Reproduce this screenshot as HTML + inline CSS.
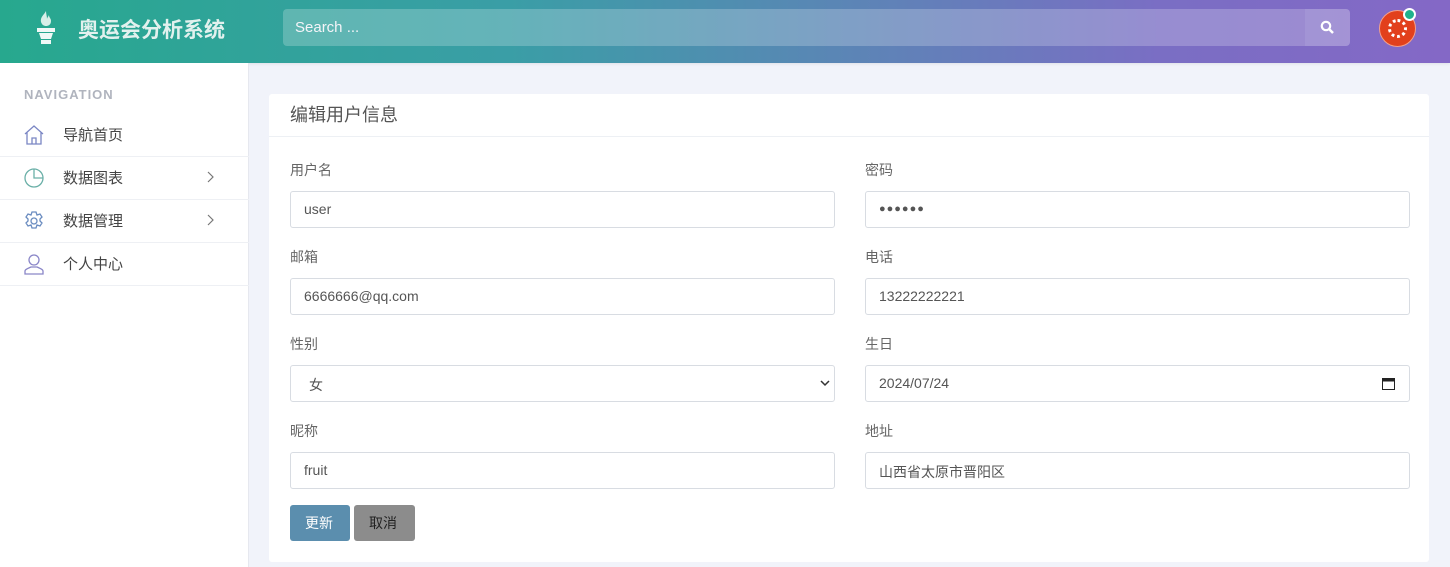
<!DOCTYPE html>
<html><head><meta charset="utf-8"><style>
*{box-sizing:border-box;margin:0;padding:0}
body{width:1450px;height:567px;overflow:hidden;background:#f1f3fa;font-family:"Liberation Sans","Noto Sans CJK SC",sans-serif;position:relative}
.hdr{position:absolute;left:0;top:0;width:1450px;height:63px;background:linear-gradient(90deg,#27a88e 0%,#3a9ea6 35%,#7a6ec4 80%,#8468c6 100%);box-shadow:0 1px 3px rgba(0,0,0,.08)}
.logo{position:absolute;left:78px;top:14px;font-size:21px;font-weight:bold;color:#e2f1ee}
.search{position:absolute;left:283px;top:9px;width:1022px;height:37px;background:rgba(255,255,255,.22);border-radius:4px 0 0 4px;color:#f4f4f8;font-size:15px;padding:10px 12px}
.sbtn{position:absolute;left:1305px;top:9px;width:45px;height:37px;background:rgba(255,255,255,.28);border-radius:0 4px 4px 0}
.side{position:absolute;left:0;top:63px;width:249px;height:504px;background:#fff;border-right:1px solid #e6e8ef}
.navt{position:absolute;left:24px;top:24px;font-size:13px;color:#b0b4be;letter-spacing:1px;font-weight:bold}
.item{position:absolute;left:0;width:249px;height:43px;border-bottom:1px solid #eef0f4;font-size:15px;color:#444}
.item span{position:absolute;left:63px;top:10px}
.item svg{position:absolute;left:23px;top:10px}
.item .ch{position:absolute;left:208px;top:10px}
.card{position:absolute;left:269px;top:94px;width:1160px;height:468px;background:#fff;border-radius:3px}
.ct{height:43px;border-bottom:1px solid #edf0f4;font-size:18px;color:#555;padding:7px 21px}
.lbl{position:absolute;font-size:14px;color:#666}
.inp{position:absolute;width:545px;height:37px;border:1px solid #d8dce2;border-radius:3px;font-size:14px;color:#555;padding:9px 13px}
.btn{position:absolute;top:411px;height:36px;border-radius:3px;color:#fff;font-size:14px;padding:8px 15px}
</style></head><body>
<div class="hdr">
<svg style="position:absolute;left:35px;top:10px" width="22" height="36" viewBox="0 0 22 36"><path d="M11 1c-2 4-6 6-5 11 1 3 3 4 5 4s5-1 5-5c0-3-2-3-2-6-1 2-2 3-2 4 0-3-1-5-1-8z" fill="#d8efe8"/><rect x="2" y="18" width="18" height="4" fill="#f0f8f6"/><path d="M4 23h14l-2 6H6z" fill="#f0f8f6"/><rect x="6" y="30" width="10" height="4" fill="#f0f8f6"/></svg>
<div class="logo">奥运会分析系统</div>
<div class="search">Search ...</div>
<div class="sbtn"><svg style="position:absolute;left:15px;top:11px" width="15" height="15" viewBox="0 0 15 15"><circle cx="6" cy="6" r="4.2" stroke="#fff" stroke-width="2.2" fill="none"/><path d="M9 9l4 4" stroke="#fff" stroke-width="2.5"/></svg></div>
<div style="position:absolute;left:1379px;top:10px;width:37px;height:37px;border-radius:50%;background:#e2401c;border:1px solid #f4a08a"></div>
<div style="position:absolute;left:1388px;top:19px;width:19px;height:19px;border-radius:50%;border:3px dotted #fff"></div>
<div style="position:absolute;left:1403px;top:8px;width:13px;height:13px;border-radius:50%;background:#1fb28c;border:2px solid #fff"></div>
</div>
<div class="side">
<div class="navt">NAVIGATION</div>
<div class="item" style="top:51px"><svg width="22" height="22" viewBox="0 0 22 22" fill="none" stroke="#7a86c4" stroke-width="1.3"><path d="M2 10L11 2l9 8M4 8v12h14V8M9 20v-6h4v6"/></svg><span>导航首页</span></div>
<div class="item" style="top:94px"><svg width="22" height="22" viewBox="0 0 22 22" fill="none" stroke="#6bb0a8" stroke-width="1.3"><circle cx="11" cy="11" r="9"/><path d="M11 2v9h9"/></svg><span>数据图表</span><svg class="ch" style="left:207px;top:14px" width="8" height="12" viewBox="0 0 8 12"><path d="M1 1l5 5-5 5" stroke="#777" fill="none" stroke-width="1.2"/></svg></div>
<div class="item" style="top:137px"><svg width="22" height="22" viewBox="0 0 22 22" fill="none" stroke="#6a8cc0" stroke-width="1.3"><circle cx="11" cy="11" r="3"/><path d="M9 2h4l1 3 3-1 2 3-2 2 0 2 2 2-2 3-3-1-1 3H9l-1-3-3 1-2-3 2-2V9L3 7l2-3 3 1z"/></svg><span>数据管理</span><svg class="ch" style="left:207px;top:14px" width="8" height="12" viewBox="0 0 8 12"><path d="M1 1l5 5-5 5" stroke="#777" fill="none" stroke-width="1.2"/></svg></div>
<div class="item" style="top:180px"><svg width="22" height="22" viewBox="0 0 22 22" fill="none" stroke="#8a86c8" stroke-width="1.3"><circle cx="11" cy="7" r="5"/><path d="M2 21v-3c0-2 4-3 6-4h6c2 1 6 2 6 4v3z"/></svg><span>个人中心</span></div>
</div>
<div class="card">
<div class="ct">编辑用户信息</div>
<div class="lbl" style="left:21px;top:66px">用户名</div><div class="lbl" style="left:596px;top:66px">密码</div>
<div class="inp" style="left:21px;top:97px">user</div><div class="inp" style="left:596px;top:97px;font-size:11px;letter-spacing:1px;padding-top:11px">●●●●●●</div>
<div class="lbl" style="left:21px;top:153px">邮箱</div><div class="lbl" style="left:596px;top:153px">电话</div>
<div class="inp" style="left:21px;top:184px">6666666@qq.com</div><div class="inp" style="left:596px;top:184px">13222222221</div>
<div class="lbl" style="left:21px;top:240px">性别</div><div class="lbl" style="left:596px;top:240px">生日</div>
<div class="inp" style="left:21px;top:271px;padding-left:18px">女<svg style="position:absolute;right:4px;top:14px" width="10" height="7" viewBox="0 0 10 7"><path d="M1 1l4 4 4-4" stroke="#333" fill="none" stroke-width="1.5"/></svg></div><div class="inp" style="left:596px;top:271px">2024/07/24<svg style="position:absolute;right:14px;top:11px" width="13" height="13" viewBox="0 0 13 13"><rect x="0.5" y="1.5" width="12" height="11" fill="none" stroke="#222"/><rect x="0.5" y="1.5" width="12" height="3" fill="#222"/></svg></div>
<div class="lbl" style="left:21px;top:327px">昵称</div><div class="lbl" style="left:596px;top:327px">地址</div>
<div class="inp" style="left:21px;top:358px">fruit</div><div class="inp" style="left:596px;top:358px">山西省太原市晋阳区</div>
<div class="btn" style="left:21px;width:60px;background:#5b8eae">更新</div>
<div class="btn" style="left:85px;width:61px;background:#8c8c8c;color:#222">取消</div>
</div>
</body></html>
